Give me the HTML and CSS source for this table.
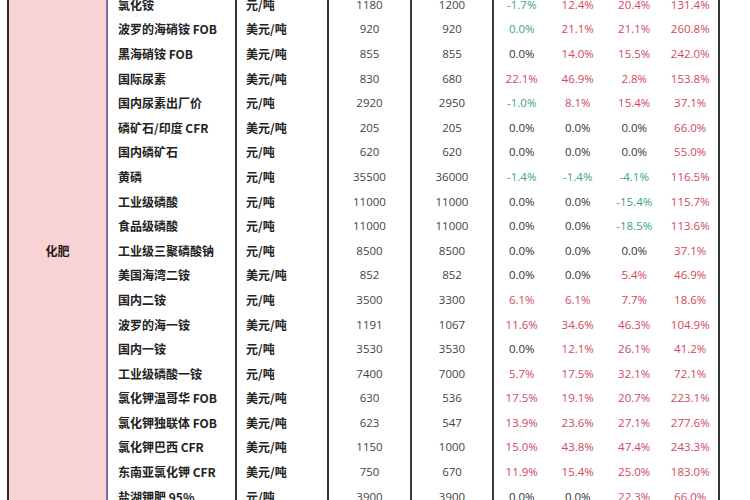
FILE: index.html
```html
<!DOCTYPE html>
<html lang="zh">
<head>
<meta charset="utf-8">
<link rel="stylesheet" href="styles.css">
</head>
<body>
<table class="sheet">
<colgroup>
<col class="c-cat"><col class="c-name"><col class="c-unit"><col class="c-v"><col class="c-v2"><col class="c-p"><col class="c-p"><col class="c-p"><col class="c-p">
</colgroup>
<tbody>
<tr><td class="cat" rowspan="21">化肥</td><td class="name">氯化铵</td><td class="unit">元/吨</td><td class="v">1180</td><td class="v v2">1200</td><td class="p g first">-1.7%</td><td class="p r">12.4%</td><td class="p r">20.4%</td><td class="p r last">131.4%</td></tr>
<tr><td class="name">波罗的海硝铵 FOB</td><td class="unit">美元/吨</td><td class="v">920</td><td class="v v2">920</td><td class="p g first">0.0%</td><td class="p r">21.1%</td><td class="p r">21.1%</td><td class="p r last">260.8%</td></tr>
<tr><td class="name">黑海硝铵 FOB</td><td class="unit">美元/吨</td><td class="v">855</td><td class="v v2">855</td><td class="p k first">0.0%</td><td class="p r">14.0%</td><td class="p r">15.5%</td><td class="p r last">242.0%</td></tr>
<tr><td class="name">国际尿素</td><td class="unit">美元/吨</td><td class="v">830</td><td class="v v2">680</td><td class="p r first">22.1%</td><td class="p r">46.9%</td><td class="p r">2.8%</td><td class="p r last">153.8%</td></tr>
<tr><td class="name">国内尿素出厂价</td><td class="unit">元/吨</td><td class="v">2920</td><td class="v v2">2950</td><td class="p g first">-1.0%</td><td class="p r">8.1%</td><td class="p r">15.4%</td><td class="p r last">37.1%</td></tr>
<tr><td class="name">磷矿石/印度 CFR</td><td class="unit">美元/吨</td><td class="v">205</td><td class="v v2">205</td><td class="p k first">0.0%</td><td class="p k">0.0%</td><td class="p k">0.0%</td><td class="p r last">66.0%</td></tr>
<tr><td class="name">国内磷矿石</td><td class="unit">元/吨</td><td class="v">620</td><td class="v v2">620</td><td class="p k first">0.0%</td><td class="p k">0.0%</td><td class="p k">0.0%</td><td class="p r last">55.0%</td></tr>
<tr><td class="name">黄磷</td><td class="unit">元/吨</td><td class="v">35500</td><td class="v v2">36000</td><td class="p g first">-1.4%</td><td class="p g">-1.4%</td><td class="p g">-4.1%</td><td class="p r last">116.5%</td></tr>
<tr><td class="name">工业级磷酸</td><td class="unit">元/吨</td><td class="v">11000</td><td class="v v2">11000</td><td class="p k first">0.0%</td><td class="p k">0.0%</td><td class="p g">-15.4%</td><td class="p r last">115.7%</td></tr>
<tr><td class="name">食品级磷酸</td><td class="unit">元/吨</td><td class="v">11000</td><td class="v v2">11000</td><td class="p k first">0.0%</td><td class="p k">0.0%</td><td class="p g">-18.5%</td><td class="p r last">113.6%</td></tr>
<tr><td class="name">工业级三聚磷酸钠</td><td class="unit">元/吨</td><td class="v">8500</td><td class="v v2">8500</td><td class="p k first">0.0%</td><td class="p k">0.0%</td><td class="p k">0.0%</td><td class="p r last">37.1%</td></tr>
<tr><td class="name">美国海湾二铵</td><td class="unit">美元/吨</td><td class="v">852</td><td class="v v2">852</td><td class="p k first">0.0%</td><td class="p k">0.0%</td><td class="p r">5.4%</td><td class="p r last">46.9%</td></tr>
<tr><td class="name">国内二铵</td><td class="unit">元/吨</td><td class="v">3500</td><td class="v v2">3300</td><td class="p r first">6.1%</td><td class="p r">6.1%</td><td class="p r">7.7%</td><td class="p r last">18.6%</td></tr>
<tr><td class="name">波罗的海一铵</td><td class="unit">美元/吨</td><td class="v">1191</td><td class="v v2">1067</td><td class="p r first">11.6%</td><td class="p r">34.6%</td><td class="p r">46.3%</td><td class="p r last">104.9%</td></tr>
<tr><td class="name">国内一铵</td><td class="unit">元/吨</td><td class="v">3530</td><td class="v v2">3530</td><td class="p k first">0.0%</td><td class="p r">12.1%</td><td class="p r">26.1%</td><td class="p r last">41.2%</td></tr>
<tr><td class="name">工业级磷酸一铵</td><td class="unit">元/吨</td><td class="v">7400</td><td class="v v2">7000</td><td class="p r first">5.7%</td><td class="p r">17.5%</td><td class="p r">32.1%</td><td class="p r last">72.1%</td></tr>
<tr><td class="name">氯化钾温哥华 FOB</td><td class="unit">美元/吨</td><td class="v">630</td><td class="v v2">536</td><td class="p r first">17.5%</td><td class="p r">19.1%</td><td class="p r">20.7%</td><td class="p r last">223.1%</td></tr>
<tr><td class="name">氯化钾独联体 FOB</td><td class="unit">美元/吨</td><td class="v">623</td><td class="v v2">547</td><td class="p r first">13.9%</td><td class="p r">23.6%</td><td class="p r">27.1%</td><td class="p r last">277.6%</td></tr>
<tr><td class="name">氯化钾巴西 CFR</td><td class="unit">美元/吨</td><td class="v">1150</td><td class="v v2">1000</td><td class="p r first">15.0%</td><td class="p r">43.8%</td><td class="p r">47.4%</td><td class="p r last">243.3%</td></tr>
<tr><td class="name">东南亚氯化钾 CFR</td><td class="unit">美元/吨</td><td class="v">750</td><td class="v v2">670</td><td class="p r first">11.9%</td><td class="p r">15.4%</td><td class="p r">25.0%</td><td class="p r last">183.0%</td></tr>
<tr><td class="name">盐湖钾肥 95%</td><td class="unit">元/吨</td><td class="v">3900</td><td class="v v2">3900</td><td class="p k first">0.0%</td><td class="p k">0.0%</td><td class="p r">22.3%</td><td class="p r last">66.0%</td></tr>
</tbody>
</table>
</body>
</html>
```
FILE: styles.css
```css
html, body {
  margin: 0;
  padding: 0;
  background: #ffffff;
}
body {
  width: 750px;
  height: 500px;
  overflow: hidden;
}
.sheet {
  border-collapse: collapse;
  table-layout: fixed;
  width: 711px;
  margin: -8px 0 0 7px;
  font-family: "Open Sans", "Noto Sans CJK SC", sans-serif;
  font-size: 11.5px;
}
.c-cat { width: 99px; }
.c-name { width: 129px; }
.c-unit { width: 92px; }
.c-v { width: 83px; }
.c-v2 { width: 82px; }
.c-p { width: 56.5px; }
.sheet td {
  height: 24.6px;
  padding: 0;
  white-space: nowrap;
  vertical-align: middle;
}
.cat {
  background: #f8d3d6;
  border-left: 2px solid #2a2a2a;
  border-right: 2px solid #7e6aa0;
  text-align: center;
  font-family: "Noto Sans CJK SC", sans-serif;
  font-weight: 700;
  font-size: 12px;
  color: #2a1a1a;
}
.name {
  padding-left: 10px !important;
  font-family: "Noto Sans CJK SC", sans-serif;
  font-weight: 700;
  font-size: 12px;
  color: #222;
  border-right: 2px solid #333;
}
.unit {
  padding-left: 9px !important;
  font-family: "Noto Sans CJK SC", sans-serif;
  font-weight: 700;
  font-size: 12px;
  color: #222;
  border-right: 2px solid #333;
}
.v {
  text-align: center;
  color: #444;
  border-right: 2px solid #3a3a3a;
}
.p {
  text-align: center;
}
.p.last { border-right: 2px solid #333; }
.r { color: #d2475d; }
.g { color: #3aa476; }
.k { color: #333; }
```
